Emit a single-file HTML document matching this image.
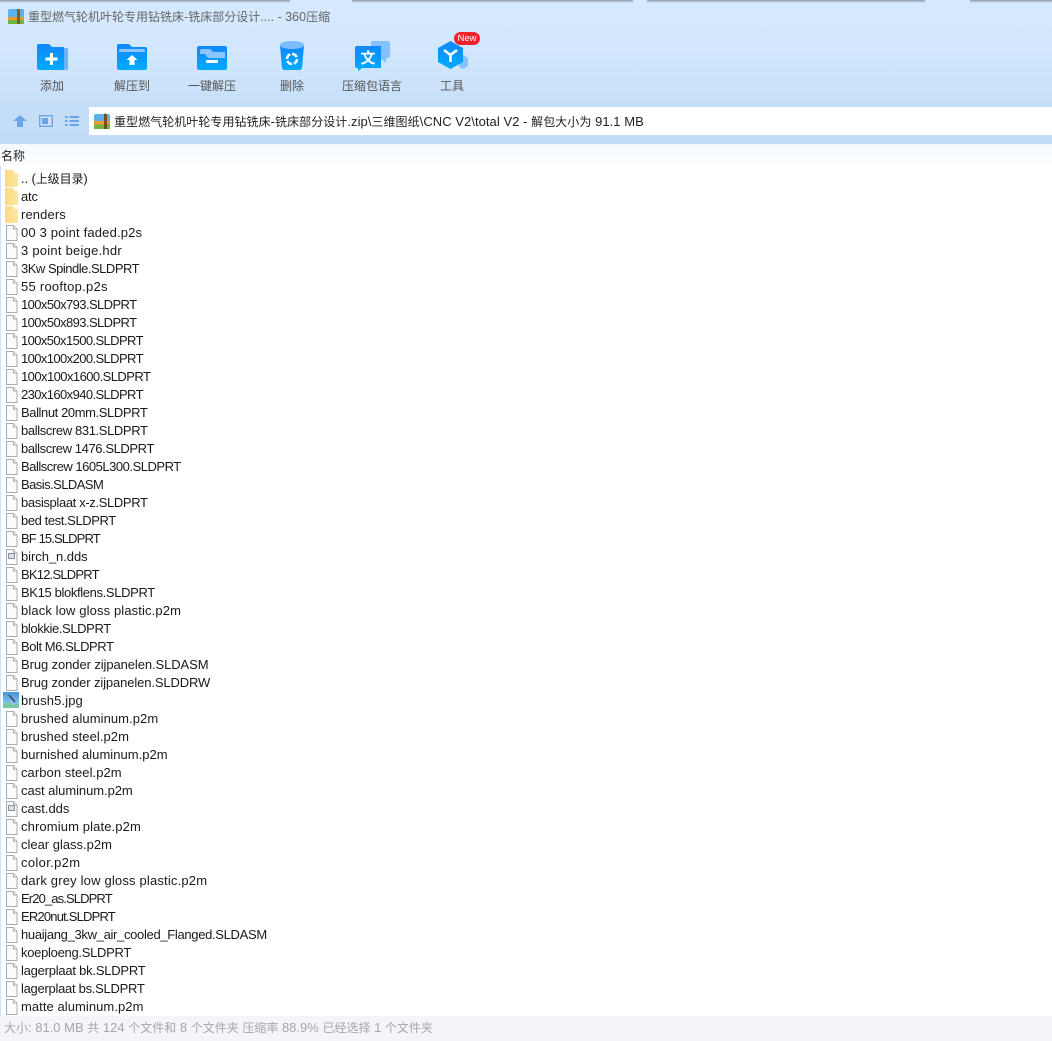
<!DOCTYPE html>
<html lang="zh-CN"><head><meta charset="utf-8"><title>360压缩</title>
<style>
html,body{margin:0;padding:0;background:#fff}
body{position:relative;width:1052px;height:1041px;overflow:hidden;font-family:"Liberation Sans","Noto Sans CJK SC",sans-serif;font-size:13px;color:#222}
.abs{position:absolute}
.c{font-size:12px}
#top{left:0;top:0;width:1052px;height:144px;background:linear-gradient(#d5e9fe 0,#d2e7fd 50px,#c6dff8 106px,#c2dcf8 144px)}
#shadow{left:0;top:0;width:1052px;height:3px;background:linear-gradient(#8a9bab,#d5e9fe)}
.gap{position:absolute;top:0;height:3px;background:#d5e9fe}
#addr{left:89px;top:107px;width:963px;height:28px;background:#fff}
#fade{left:0;top:144px;width:1052px;height:22px;background:linear-gradient(#f3f9fe,#fff)}
.tb{position:absolute;top:77px;width:90px;text-align:center;color:#555;font-size:12px;line-height:18px;white-space:nowrap}
.ic{position:absolute}
.r{position:absolute;left:21px;height:18px;line-height:18px;white-space:nowrap;color:#1a1a1a}
.f{position:absolute;left:6px;width:12px;height:16px}
.d{position:absolute;left:5px;width:13px;height:17px}
.dds{position:absolute;left:8px;width:5px;height:4px;border:1px solid #8a93a0;background:#d9dfe8}
#status{left:0;top:1016px;width:1052px;height:25px;background:#f3f5f9;color:#a4a7ab;font-size:13px;line-height:24px;padding-left:4px;box-sizing:border-box;white-space:nowrap}
#lb{left:0;top:166px;width:1px;height:850px;background:#cfe2f8}
</style></head><body>
<svg width="0" height="0" style="position:absolute"><defs>
<linearGradient id="g" x1="0" y1="0" x2="0" y2="1"><stop offset="0" stop-color="#1188ff"/><stop offset="1" stop-color="#00aaff"/></linearGradient>
<linearGradient id="y" x1="0" y1="0" x2="1" y2="0"><stop offset="0" stop-color="#fbda80"/><stop offset="1" stop-color="#fee6a4"/></linearGradient>
<symbol id="file" viewBox="0 0 12 16"><path d="M.5.5h7l3.5 3.5v11.500H.5z" fill="#fbfbfb" stroke="#a9abae"/><path d="M7.500.5v3.500H11" fill="#eee" stroke="#a9abae"/></symbol>
<symbol id="dir" viewBox="0 0 13 17"><path d="M1 0h7.500l1 3H12a1 1 0 0 1 1 1v12a1 1 0 0 1-1 1H1a1 1 0 0 1-1-1V1a1 1 0 0 1 1-1z" fill="url(#y)"/></symbol>
</defs></svg>
<div class="abs" id="top"></div><div class="abs" id="shadow"></div>
<div class="gap" style="left:290px;width:62px"></div><div class="gap" style="left:633px;width:14px"></div><div class="gap" style="left:925px;width:45px"></div>
<div class="abs" id="addr"></div><div class="abs" id="fade"></div><div class="abs" id="lb"></div>

<svg class="ic" style="left:8px;top:9px" width="16" height="15" viewBox="0 0 16 15"><path d="M0 8V2a2 2 0 0 1 2-2h12a2 2 0 0 1 2 2v6z" fill="#5bb1ea"/><rect x="0" y="8" width="16" height="3" fill="#ef9a2c"/><rect x="0" y="11" width="16" height="4" fill="#6fb53b"/><rect x="9" y="0" width="3" height="15" fill="#8a5a1e"/></svg>
<div class="abs" style="left:28px;top:8px;font-size:12.5px;line-height:18px;color:#666;white-space:nowrap"><span class="c">重型燃气轮机叶轮专用钻铣床</span>-<span class="c">铣床部分设计</span>.... - 360<span class="c">压缩</span></div>

<svg class="ic" style="left:37px;top:43px" width="31" height="27" viewBox="0 0 31 27"><path d="M26 5h3a2 2 0 0 1 2 2v18a2 2 0 0 1-2 2h-3z" fill="#6db2ff"/><path d="M2 1h10l3 3h11a1 1 0 0 1 1 1v22H2a2 2 0 0 1-2-2V3a2 2 0 0 1 2-2z" fill="url(#g)"/><path d="M8.500 16h12M14.500 10v12" stroke="#fff" stroke-width="3" fill="none"/></svg>
<div class="tb" style="left:7px">添加</div>

<svg class="ic" style="left:117px;top:43px" width="30" height="27" viewBox="0 0 30 27"><path d="M2 1h10l3 3h13a2 2 0 0 1 2 2v19a2 2 0 0 1-2 2H2a2 2 0 0 1-2-2V3a2 2 0 0 1 2-2z" fill="url(#g)"/><path d="M3 6h24a1 1 0 0 1 1 1v2H2V7a1 1 0 0 1 1-1z" fill="#8cc5ff"/><path d="M15 12l5.500 5H17.500v5h-5v-5H9.500z" fill="#fff"/></svg>
<div class="tb" style="left:87px">解压到</div>

<svg class="ic" style="left:197px;top:46px" width="30" height="24" viewBox="0 0 30 24"><rect width="30" height="24" rx="2" fill="url(#g)"/><path d="M3 5a2 2 0 0 1 2-2h8l3 3h12v6H11L8 8H3z" fill="#8cc5ff"/><rect x="9" y="14" width="12" height="3" fill="#fff"/></svg>
<div class="tb" style="left:167px">一键解压</div>

<svg class="ic" style="left:280px;top:41px" width="24" height="30" viewBox="0 0 24 30"><path d="M0 4l2 23a3 3 0 0 0 3 2h14a3 3 0 0 0 3-2l2-23z" fill="url(#g)"/><ellipse cx="12" cy="4" rx="12" ry="4" fill="#7dbcff"/><circle cx="12" cy="18" r="5" fill="none" stroke="#fff" stroke-width="2.400" stroke-dasharray="6 1.800"/></svg>
<div class="tb" style="left:247px">删除</div>

<svg class="ic" style="left:355px;top:41px" width="35" height="30" viewBox="0 0 35 30"><path d="M16 0h17a2 2 0 0 1 2 2v13a2 2 0 0 1-2 2h-2v5l-5-4H16z" fill="#86c1ff"/><path d="M2 5h24v22H7l-4 3v-3H2a2 2 0 0 1-2-2V7a2 2 0 0 1 2-2z" fill="url(#g)"/><text x="13" y="22" text-anchor="middle" font-size="15" font-weight="700" fill="#fff" font-family="Noto Sans CJK SC, sans-serif">文</text></svg>
<div class="tb" style="left:327px">压缩包语言</div>

<svg class="ic" style="left:438px;top:41px" width="30" height="30" viewBox="0 0 30 30"><path d="M25 14l5 3v8l-5 3-4-2V16z" fill="#86c1ff"/><path d="M12.500 0l12.500 7v14l-12.500 7L0 21V7z" fill="url(#g)"/><path d="M6 9l6.500 5L19 9M12.500 14v7" stroke="#fff" stroke-width="2.600" fill="none"/></svg>
<div class="tb" style="left:407px">工具</div>
<div class="abs" style="left:454px;top:32px;width:26px;height:13px;background:#f5222d;border-radius:7px;color:#fff;font-size:9.500px;line-height:13px;text-align:center">New</div>

<svg class="ic" style="left:13px;top:115px" width="14" height="12" viewBox="0 0 14 12"><path d="M7 0l7 6h-4v6H4V6H0z" fill="#6ba4e7"/></svg>
<svg class="ic" style="left:39px;top:115px" width="14" height="12" viewBox="0 0 14 12"><rect x=".7" y=".7" width="12.600" height="10.600" fill="#cfe0f6" stroke="#6ba4e7" stroke-width="1.400"/><rect x="3" y="3" width="6" height="6" fill="#6ba4e7"/></svg>
<svg class="ic" style="left:65px;top:116px" width="14" height="10" viewBox="0 0 14 10"><path d="M0 1h2.500M4.500 1H14M0 5h2.500M4.500 5H14M0 9h2.500M4.500 9H14" stroke="#6ba4e7" stroke-width="2"/></svg>

<svg class="ic" style="left:94px;top:113px" width="16" height="16" viewBox="0 0 16 16"><path d="M0 8V3a2 2 0 0 1 2-2h7l2-1 1 1h2a2 2 0 0 1 2 2v5z" fill="#5bb1ea"/><rect y="8" width="16" height="3.500" fill="#ef9a2c"/><rect y="11.500" width="16" height="4.500" fill="#6fb53b"/><rect x="10" y="1" width="3" height="15" fill="#7a4d1a"/></svg>
<div class="abs" style="left:114px;top:113px;line-height:18px;font-size:13px;letter-spacing:.05px;color:#222;white-space:nowrap"><span class="c">重型燃气轮机叶轮专用钻铣床</span>-<span class="c">铣床部分设计</span>.zip\<span class="c">三维图纸</span>\CNC V2\total V2 - <span class="c">解包大小为</span> 91.1 MB</div>

<div class="abs" style="left:1px;top:147px;font-size:12px;line-height:18px;color:#222">名称</div>

<svg class="d" style="top:170px"><use href="#dir"/></svg><div class="r" style="top:170px;letter-spacing:-.1px">.. (<span class="c">上级目录</span>)</div>
<svg class="d" style="top:188px"><use href="#dir"/></svg><div class="r" style="top:188px;letter-spacing:-.2px">atc</div>
<svg class="d" style="top:206px"><use href="#dir"/></svg><div class="r" style="top:206px;letter-spacing:.12px">renders</div>
<svg class="f" style="top:225px"><use href="#file"/></svg><div class="r" style="top:224px;letter-spacing:.17px">00 3 point faded.p2s</div>
<svg class="f" style="top:243px"><use href="#file"/></svg><div class="r" style="top:242px;letter-spacing:.24px">3 point beige.hdr</div>
<svg class="f" style="top:261px"><use href="#file"/></svg><div class="r" style="top:260px;letter-spacing:-.49px">3Kw Spindle.SLDPRT</div>
<svg class="f" style="top:279px"><use href="#file"/></svg><div class="r" style="top:278px;letter-spacing:.26px">55 rooftop.p2s</div>
<svg class="f" style="top:297px"><use href="#file"/></svg><div class="r" style="top:296px;letter-spacing:-.59px">100x50x793.SLDPRT</div>
<svg class="f" style="top:315px"><use href="#file"/></svg><div class="r" style="top:314px;letter-spacing:-.59px">100x50x893.SLDPRT</div>
<svg class="f" style="top:333px"><use href="#file"/></svg><div class="r" style="top:332px;letter-spacing:-.6px">100x50x1500.SLDPRT</div>
<svg class="f" style="top:351px"><use href="#file"/></svg><div class="r" style="top:350px;letter-spacing:-.6px">100x100x200.SLDPRT</div>
<svg class="f" style="top:369px"><use href="#file"/></svg><div class="r" style="top:368px;letter-spacing:-.56px">100x100x1600.SLDPRT</div>
<svg class="f" style="top:387px"><use href="#file"/></svg><div class="r" style="top:386px;letter-spacing:-.6px">230x160x940.SLDPRT</div>
<svg class="f" style="top:405px"><use href="#file"/></svg><div class="r" style="top:404px;letter-spacing:-.41px">Ballnut 20mm.SLDPRT</div>
<svg class="f" style="top:423px"><use href="#file"/></svg><div class="r" style="top:422px;letter-spacing:-.38px">ballscrew 831.SLDPRT</div>
<svg class="f" style="top:441px"><use href="#file"/></svg><div class="r" style="top:440px;letter-spacing:-.4px">ballscrew 1476.SLDPRT</div>
<svg class="f" style="top:459px"><use href="#file"/></svg><div class="r" style="top:458px;letter-spacing:-.48px">Ballscrew 1605L300.SLDPRT</div>
<svg class="f" style="top:477px"><use href="#file"/></svg><div class="r" style="top:476px;letter-spacing:-.55px">Basis.SLDASM</div>
<svg class="f" style="top:495px"><use href="#file"/></svg><div class="r" style="top:494px;letter-spacing:-.36px">basisplaat x-z.SLDPRT</div>
<svg class="f" style="top:513px"><use href="#file"/></svg><div class="r" style="top:512px;letter-spacing:-.41px">bed test.SLDPRT</div>
<svg class="f" style="top:531px"><use href="#file"/></svg><div class="r" style="top:530px;letter-spacing:-.88px">BF 15.SLDPRT</div>
<svg class="f" style="top:549px"><use href="#file"/></svg><div class="dds" style="top:553px"></div><div class="r" style="top:548px;letter-spacing:-.06px">birch_n.dds</div>
<svg class="f" style="top:567px"><use href="#file"/></svg><div class="r" style="top:566px;letter-spacing:-.79px">BK12.SLDPRT</div>
<svg class="f" style="top:585px"><use href="#file"/></svg><div class="r" style="top:584px;letter-spacing:-.36px">BK15 blokflens.SLDPRT</div>
<svg class="f" style="top:603px"><use href="#file"/></svg><div class="r" style="top:602px;letter-spacing:.12px">black low gloss plastic.p2m</div>
<svg class="f" style="top:621px"><use href="#file"/></svg><div class="r" style="top:620px;letter-spacing:-.38px">blokkie.SLDPRT</div>
<svg class="f" style="top:639px"><use href="#file"/></svg><div class="r" style="top:638px;letter-spacing:-.45px">Bolt M6.SLDPRT</div>
<svg class="f" style="top:657px"><use href="#file"/></svg><div class="r" style="top:656px;letter-spacing:-.09px">Brug zonder zijpanelen.SLDASM</div>
<svg class="f" style="top:675px"><use href="#file"/></svg><div class="r" style="top:674px;letter-spacing:-.12px">Brug zonder zijpanelen.SLDDRW</div>
<svg class="ic" style="left:3px;top:692px" width="16" height="16" viewBox="0 0 16 16"><defs><linearGradient id="sky" x1="0" y1="0" x2="0" y2="1"><stop offset="0" stop-color="#3f95dd"/><stop offset="1" stop-color="#a6d8f2"/></linearGradient></defs><rect width="16" height="16" fill="url(#sky)"/><path d="M0 16v-4l5-2 5 3 6-2v5z" fill="#7cc6a0"/><path d="M6 3l6 7" stroke="#445" stroke-width="1.500"/></svg>
<div class="r" style="top:692px;letter-spacing:.12px">brush5.jpg</div>
<svg class="f" style="top:711px"><use href="#file"/></svg><div class="r" style="top:710px;letter-spacing:.07px">brushed aluminum.p2m</div>
<svg class="f" style="top:729px"><use href="#file"/></svg><div class="r" style="top:728px;letter-spacing:.06px">brushed steel.p2m</div>
<svg class="f" style="top:747px"><use href="#file"/></svg><div class="r" style="top:746px;letter-spacing:.03px">burnished aluminum.p2m</div>
<svg class="f" style="top:765px"><use href="#file"/></svg><div class="r" style="top:764px;letter-spacing:.06px">carbon steel.p2m</div>
<svg class="f" style="top:783px"><use href="#file"/></svg><div class="r" style="top:782px;letter-spacing:-.06px">cast aluminum.p2m</div>
<svg class="f" style="top:801px"><use href="#file"/></svg><div class="dds" style="top:805px"></div><div class="r" style="top:800px;letter-spacing:0">cast.dds</div>
<svg class="f" style="top:819px"><use href="#file"/></svg><div class="r" style="top:818px;letter-spacing:.12px">chromium plate.p2m</div>
<svg class="f" style="top:837px"><use href="#file"/></svg><div class="r" style="top:836px;letter-spacing:-.01px">clear glass.p2m</div>
<svg class="f" style="top:855px"><use href="#file"/></svg><div class="r" style="top:854px;letter-spacing:.34px">color.p2m</div>
<svg class="f" style="top:873px"><use href="#file"/></svg><div class="r" style="top:872px;letter-spacing:.18px">dark grey low gloss plastic.p2m</div>
<svg class="f" style="top:891px"><use href="#file"/></svg><div class="r" style="top:890px;letter-spacing:-.88px">Er20_as.SLDPRT</div>
<svg class="f" style="top:909px"><use href="#file"/></svg><div class="r" style="top:908px;letter-spacing:-.81px">ER20nut.SLDPRT</div>
<svg class="f" style="top:927px"><use href="#file"/></svg><div class="r" style="top:926px;letter-spacing:-.32px">huaijang_3kw_air_cooled_Flanged.SLDASM</div>
<svg class="f" style="top:945px"><use href="#file"/></svg><div class="r" style="top:944px;letter-spacing:-.29px">koeploeng.SLDPRT</div>
<svg class="f" style="top:963px"><use href="#file"/></svg><div class="r" style="top:962px;letter-spacing:-.23px">lagerplaat bk.SLDPRT</div>
<svg class="f" style="top:981px"><use href="#file"/></svg><div class="r" style="top:980px;letter-spacing:-.28px">lagerplaat bs.SLDPRT</div>
<svg class="f" style="top:999px"><use href="#file"/></svg><div class="r" style="top:998px;letter-spacing:.06px">matte aluminum.p2m</div>

<div class="abs" id="status"><span class="c">大小</span>: 81.0 MB <span class="c">共</span> 124 <span class="c">个文件和</span> 8 <span class="c">个文件夹</span> <span class="c">压缩率</span> 88.9% <span class="c">已经选择</span> 1 <span class="c">个文件夹</span></div>
</body></html>
